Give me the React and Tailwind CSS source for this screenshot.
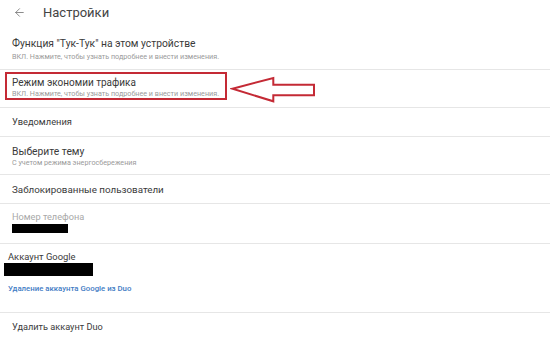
import { ArrowLeft } from "lucide-react";

export default function App() {
  const font = { fontFamily: "Roboto, 'Noto Sans', sans-serif" };

  return (
    <div className="relative w-[550px] h-[352px] overflow-hidden bg-white" style={font}>
      {/* Header */}
      <div className="h-[27px] flex items-center pb-[3px]">
        <ArrowLeft className="ml-[13px] text-[#7a7a7a]" size={13} strokeWidth={1.6} />
        <span className="ml-[17px] text-[13px] leading-none text-[#444]">Настройки</span>
      </div>

      {/* Tap-tap */}
      <div className="pl-[12px] pt-[11px] pb-[7px]">
        <div className="text-[10.3px] leading-[12px] text-[#3a3a3a]">Функция "Тук-Тук" на этом устройстве</div>
        <div className="mt-[2px] text-[7.2px] leading-[10px] text-[#9a9a9a]">
          ВКЛ. Нажмите, чтобы узнать подробнее и внести изменения.
        </div>
      </div>
      <div className="h-px bg-[#e6e6e6]" />

      {/* Data saver, highlighted */}
      <div className="pl-[5px] pt-[2px] pb-[7px]">
        <div className="w-[222px] border-2 border-[#c42a35] pl-[5px] pt-[3px]">
          <div className="text-[10px] leading-[12px] text-[#3a3a3a]">Режим экономии трафика</div>
          <div className="text-[7.2px] leading-[9px] text-[#9a9a9a]">
            ВКЛ. Нажмите, чтобы узнать подробнее и внести изменения.
          </div>
        </div>
      </div>
      <div className="h-px bg-[#e6e6e6]" />

      <div className="pl-[12px] pt-[8px] pb-[8px]">
        <div className="text-[9.3px] leading-[12px] text-[#3a3a3a]">Уведомления</div>
      </div>
      <div className="h-px bg-[#e6e6e6]" />

      <div className="pl-[12px] pt-[9px] pb-[7px]">
        <div className="text-[10.3px] leading-[12px] text-[#3a3a3a]">Выберите тему</div>
        <div className="text-[7.2px] leading-[9px] text-[#9a9a9a]">С учетом режима энергосбережения</div>
      </div>
      <div className="h-px bg-[#e6e6e6]" />

      <div className="pl-[12px] pt-[9px] pb-[7px]">
        <div className="text-[9.8px] leading-[12px] text-[#3a3a3a]">Заблокированные пользователи</div>
      </div>
      <div className="h-px bg-[#e6e6e6]" />

      <div className="pl-[12px] pt-[7px] pb-[10px]">
        <div className="text-[9.2px] leading-[12px] text-[#a8a8a8]">Номер телефона</div>
        <div className="mt-[1px] w-[56px] h-[9px] bg-black" />
      </div>
      <div className="h-px bg-[#e6e6e6]" />

      <div className="pt-[7px] pb-[18px]">
        <div className="pl-[8px] text-[9.4px] leading-[12px] text-[#3a3a3a]">Аккаунт Google</div>
        <div className="ml-[4px] w-[89px] h-[13px] bg-black" />
        <div className="pl-[8px] mt-[8px] text-[7.8px] leading-[10px] font-medium text-[#3f7cc4]">
          Удаление аккаунта Google из Duo
        </div>
      </div>
      <div className="h-px bg-[#e6e6e6]" />

      <div className="pl-[12px] pt-[8px]">
        <div className="text-[9.2px] leading-[12px] text-[#3a3a3a]">Удалить аккаунт Duo</div>
      </div>

      {/* Annotation arrow */}
      <svg className="absolute left-[230px] top-[76px]" width="90" height="30" viewBox="0 0 90 30">
        <polygon
          points="2.5,12.7 43.3,2 43.3,8.7 84,8.7 84,19.3 43.3,19.3 43.3,25.3"
          fill="none"
          stroke="#c42a35"
          strokeWidth="2"
          strokeLinejoin="miter"
        />
      </svg>
    </div>
  );
}
